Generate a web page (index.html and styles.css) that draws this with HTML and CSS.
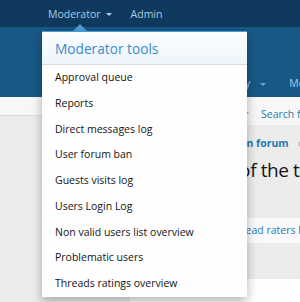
FILE: index.html
```html
<!DOCTYPE html>
<html lang="en">

<head>
    <meta charset="UTF-8">
    <meta name="viewport" content="width=device-width, initial-scale=1.0">
    <title>Moderator tools</title>
    <link rel="stylesheet" href="styles.css">
</head>

<body>
    <div class="page">
        <div class="topbar">
            <a class="top-link is-open">Moderator<span class="caret"></span></a>
            <a class="top-link">Admin</a>
        </div>

        <div class="navband">
            <div class="nav-row">
                <a class="nav-link">Privacy<span class="caret caret-dim"></span></a>
                <a class="nav-link">Members</a>
            </div>
        </div>

        <div class="section-bar">
            <div class="section-links"></div>
            <div class="section-search">
                <span class="caret caret-gray"></span>
                <a class="section-link">Search forums</a>
            </div>
        </div>

        <div class="body-area">
            <div class="crumbs"><a>Main forum</a><span class="sep">&rsaquo;</span></div>
            <h1 class="title">Report of the thread</h1>

            <div class="block strip">
                <a class="strip-link">Thread raters list</a>
            </div>
            <div class="spacer"></div>
            <div class="block block-low"></div>
        </div>

        <!-- open dropdown, sits over the page -->
        <div class="menu-arrow"></div>
        <div class="menu">
            <h3 class="menu-header">Moderator tools</h3>
            <a class="menu-row">Approval queue</a>
            <a class="menu-row">Reports</a>
            <a class="menu-row">Direct messages log</a>
            <a class="menu-row">User forum ban</a>
            <a class="menu-row">Guests visits log</a>
            <a class="menu-row">Users Login Log</a>
            <a class="menu-row">Non valid users list overview</a>
            <a class="menu-row">Problematic users</a>
            <a class="menu-row">Threads ratings overview</a>
        </div>
    </div>
</body>

</html>
```

FILE: styles.css
```css
body {
    margin: 0;
    font-family: "Open Sans", "Noto Sans", sans-serif;
    font-size: 10.5px;
    color: #141414;
    background-color: #ececec;
    overflow: hidden;
}

a {
    text-decoration: none;
    cursor: pointer;
}

.page {
    position: relative;
    width: 300px;
    height: 302px;
    overflow: hidden;
}

.caret {
    display: inline-block;
    width: 0;
    height: 0;
    border-left: 3px solid transparent;
    border-right: 3px solid transparent;
    border-top: 3px solid currentColor;
    vertical-align: middle;
    margin-left: 5px;
}

.caret-dim {
    color: #6f9fc6;
    margin-left: 10px;
}

.caret-gray {
    color: #a0a0a0;
    margin-left: 0;
}

/* top bar */
.topbar {
    height: 27px;
    background-color: #0f3a5e;
    display: flex;
    align-items: center;
    padding-left: 48px;
    gap: 19px;
}

.top-link {
    color: #a7cbe8;
    white-space: nowrap;
}

/* blue band */
.navband {
    height: 70px;
    background-color: #185886;
    display: flex;
    align-items: flex-end;
    justify-content: flex-end;
}

.nav-row {
    display: flex;
    gap: 23px;
    padding-bottom: 7px;
    margin-right: -36px;
}

.nav-link {
    color: #a7cbe8;
    white-space: nowrap;
}

/* section bar */
.section-bar {
    display: flex;
    align-items: flex-start;
    height: 28px;
}

.section-links {
    flex: 1;
    height: 18px;
    background-color: #f7f7f7;
    border-bottom: 1px solid #dcdcdc;
}

.section-search {
    width: 100px;
    height: 28px;
    background-color: #f7f7f7;
    display: flex;
    align-items: center;
    padding-left: 43px;
    padding-top: 5px;
    box-sizing: border-box;
    gap: 12px;
    white-space: nowrap;
}

.section-link {
    color: #2577b1;
}

/* page body */
.body-area {
    padding-top: 11px;
}

.crumbs {
    padding-left: 227px;
    white-space: nowrap;
    font-weight: bold;
    color: #2577b1;
}

.crumbs .sep {
    color: #9a9a9a;
    font-weight: normal;
    margin-left: 9px;
}

.title {
    margin: 7px 0 0 0;
    padding-left: 177px;
    font-size: 19px;
    letter-spacing: -0.4px;
    font-weight: normal;
    white-space: nowrap;
}

.block {
    margin-left: 130px;
    background-color: #fafafa;
}

.strip {
    margin-top: 35px;
    height: 25px;
    line-height: 25px;
    padding-left: 99px;
    white-space: nowrap;
}

.strip-link {
    color: #2577b1;
}

.spacer {
    height: 36px;
}

.block-low {
    height: 30px;
    background-color: #fefefe;
}

/* dropdown */
.menu-arrow {
    position: absolute;
    left: 73px;
    top: 24px;
    width: 0;
    height: 0;
    border-left: 7px solid transparent;
    border-right: 7px solid transparent;
    border-bottom: 7px solid #4d9bd6;
}

.menu {
    position: absolute;
    left: 42px;
    top: 31px;
    width: 205px;
    background-color: #fefefe;
    border-top: 1px solid #4d9bd6;
    box-shadow: 0 4px 10px rgba(0, 0, 0, 0.3);
}

.menu-header {
    margin: 0;
    padding: 1px 13px 0;
    height: 31px;
    line-height: 31px;
    font-size: 13.7px;
    font-weight: normal;
    color: #3a8bc8;
    background: linear-gradient(#fbfdff, #eef5fb);
    border-bottom: 1px solid #dadada;
}

.menu-row {
    display: block;
    padding: 4px 13px;
    line-height: 17.75px;
    color: #141414;
    white-space: nowrap;
}
```
